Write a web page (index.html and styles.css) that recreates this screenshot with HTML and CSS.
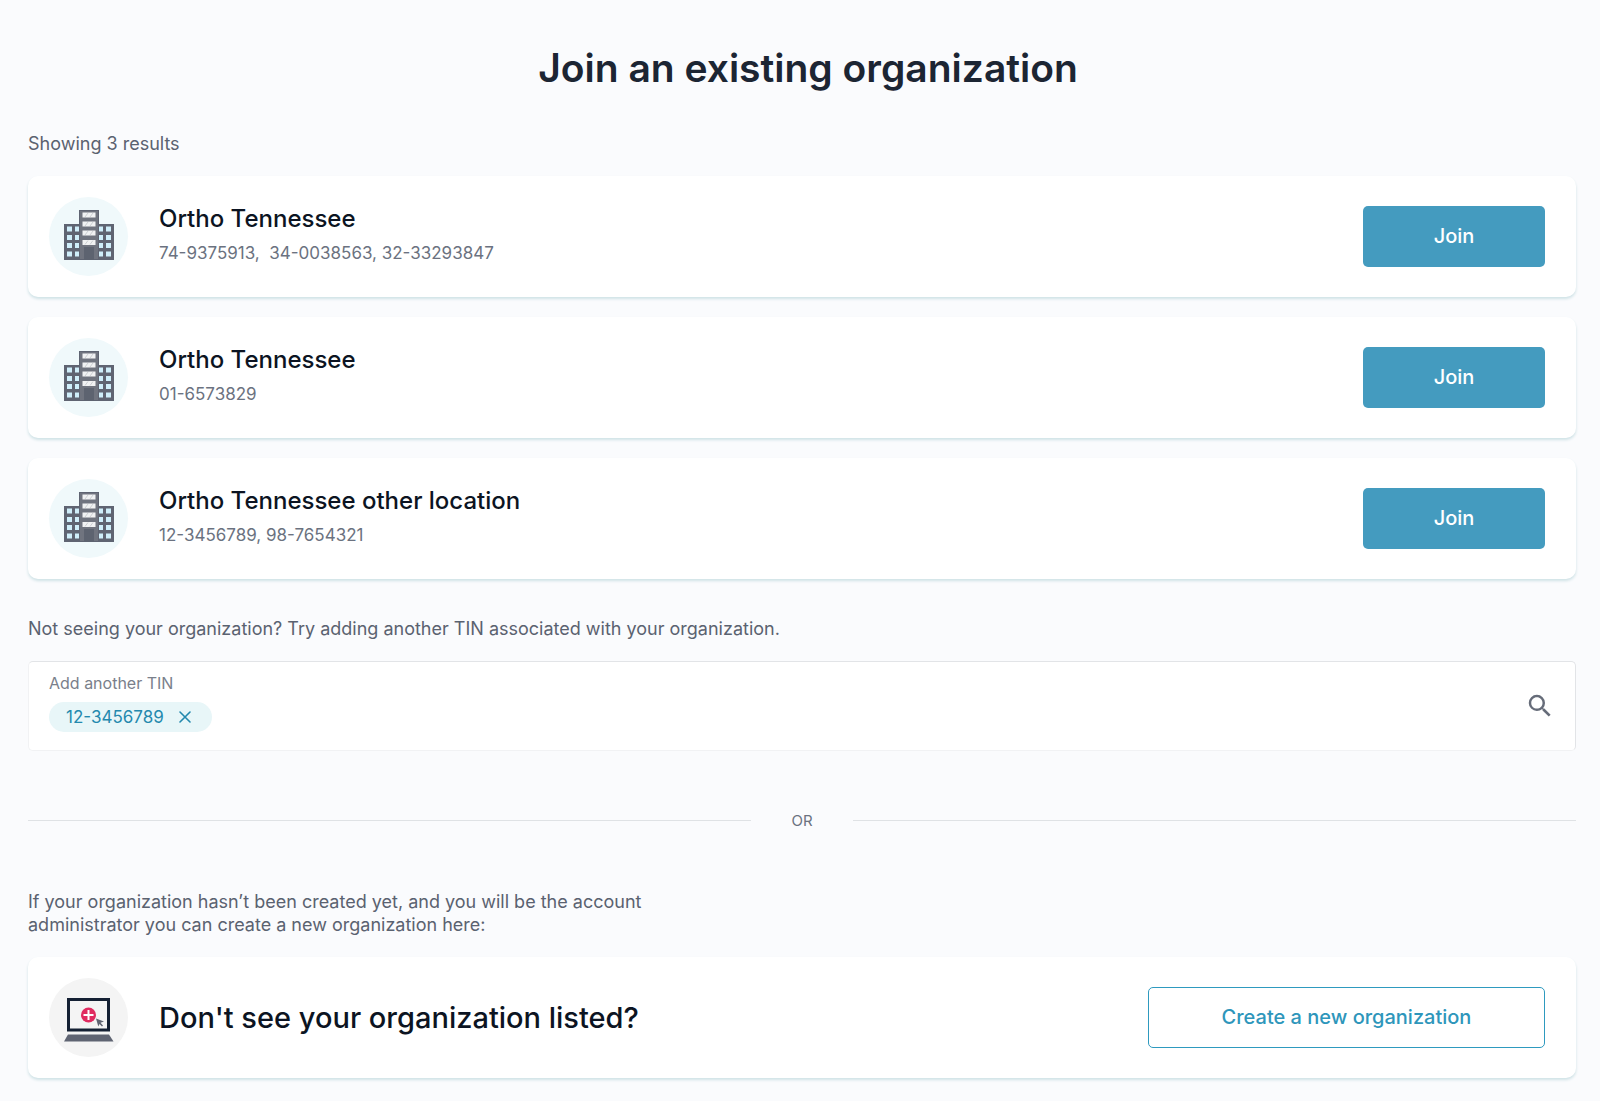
FILE: index.html
```html
<!DOCTYPE html>
<html lang="en">
<head>
<meta charset="utf-8">
<meta name="viewport" content="width=device-width, initial-scale=1">
<title>Join an existing organization</title>
<link rel="stylesheet" href="styles.css">
</head>
<body>
<svg class="sprite" aria-hidden="true">
  <symbol id="building" viewBox="0 0 50 50">
    <path fill="#5f6472" d="M0 14h15V0h20v14h15v36H0z"/>
    <path fill="#70747f" d="M16 1h18v48H16z"/>
    <path fill="#5d6370" d="M20 37h10v13H20z"/>
    <path fill="#f1f2f3" d="M18.500 2.500h13v5h-13zM18.500 11.500h13v5h-13zM18.500 20.500h13v5h-13zM18.500 30h13v5h-13z"/>
    <path stroke="#cdd0d3" d="M21 7l3-4M26 7l3-4M21 16l3-4M26 16l3-4M21 25l3-4M26 25l3-4M21 34.500l3-4M26 34.500l3-4"/>
    <path fill="#cfeefa" d="M3 16.500h5v5H3zM11 16.500h4v5h-4zM35 16.500h4v5h-4zM42 16.500h5v5h-5zM3 25h5v5H3zM11 25h4v5h-4zM35 25h4v5h-4zM42 25h5v5h-5zM3 33h5v5H3zM11 33h4v5h-4zM35 33h4v5h-4zM42 33h5v5h-5zM3 41.500h5v5H3zM11 41.500h4v5h-4zM35 41.500h4v5h-4zM42 41.500h5v5h-5z"/>
  </symbol>
</svg>
<main class="page">
  <h1 class="page-title">Join an existing organization</h1>
  <p class="note">Showing 3 results</p>
  <ul class="results">
    <li class="card">
      <span class="avatar avatar-building"><svg class="avatar-icon" aria-hidden="true"><use href="#building"/></svg></span>
      <div class="card-text">
        <h2 class="card-name">Ortho Tennessee</h2>
        <p class="card-tins">74-9375913,&nbsp; 34-0038563, 32-33293847</p>
      </div>
      <button class="button" type="button">Join</button>
    </li>
    <li class="card">
      <span class="avatar avatar-building"><svg class="avatar-icon" aria-hidden="true"><use href="#building"/></svg></span>
      <div class="card-text">
        <h2 class="card-name">Ortho Tennessee</h2>
        <p class="card-tins">01-6573829</p>
      </div>
      <button class="button" type="button">Join</button>
    </li>
    <li class="card">
      <span class="avatar avatar-building"><svg class="avatar-icon" aria-hidden="true"><use href="#building"/></svg></span>
      <div class="card-text">
        <h2 class="card-name">Ortho Tennessee other location</h2>
        <p class="card-tins">12-3456789, 98-7654321</p>
      </div>
      <button class="button" type="button">Join</button>
    </li>
  </ul>
  <p class="note">Not seeing your organization? Try adding another TIN associated with your organization.</p>
  <form class="tin-field">
    <div class="tin-main">
      <label class="tin-label" for="tin">Add another TIN</label>
      <div class="tin-entry">
        <span class="chip">12-3456789
          <button class="chip-remove" type="button" aria-label="Remove 12-3456789"><svg width="12" height="12" viewBox="0 0 12 12" fill="none" stroke="currentColor" stroke-width="1.600" stroke-linecap="round"><path d="M1 1l10 10M11 1L1 11"/></svg></button>
        </span>
        <input class="tin-input" id="tin" type="text">
      </div>
    </div>
    <button class="search" type="submit" aria-label="Search"><svg width="30" height="30" viewBox="0 0 24 24" fill="currentColor"><path d="M15.500 14h-.79l-.28-.27A6.470 6.470 0 0 0 16 9.500 6.500 6.500 0 1 0 9.500 16c1.610 0 3.090-.59 4.230-1.570l.27.28v.79l5 4.990L20.490 19l-4.990-5zm-6 0C7.010 14 5 11.990 5 9.500S7.010 5 9.500 5 14 7.010 14 9.500 11.990 14 9.500 14z"/></svg></button>
  </form>
  <div class="divider">OR</div>
  <p class="note create-note">If your organization hasn’t been created yet, and you will be the account administrator you can create a new organization here:</p>
  <section class="card">
    <span class="avatar"><svg class="avatar-icon" viewBox="0 0 50 50" aria-hidden="true">
      <path fill="none" stroke="#142033" stroke-width="3" d="M4.500 6.500h40V37h-40z"/>
      <path fill="#5f6472" d="M4 41.500h41l4.500 7H0z"/>
      <circle cx="24.500" cy="22" r="7.500" fill="#e02b60"/>
      <path stroke="#fff" stroke-width="2" d="M24.500 17v10M19.500 22h10"/>
      <path fill="#5f6472" d="M32 25.500l8 3-3.500 1.300 2.500 2.700-1 1-2.500-2.500-1.200 2.500z"/>
    </svg></span>
    <h2 class="card-text create-title">Don't see your organization listed?</h2>
    <button class="button button-outline" type="button">Create a new organization</button>
  </section>
</main>
</body>
</html>
```
FILE: styles.css
```css
* {
  box-sizing: border-box;
}

body {
  margin: 0;
  background: #fafbfd;
  color: #5a6270;
  font: 18px/23px Inter, "Open Sans", sans-serif;
}

h1, h2, p, ul {
  margin: 0;
  padding: 0;
}

button, input {
  padding: 0;
  border: 0;
  background: none;
  color: inherit;
  font: inherit;
}

button {
  cursor: pointer;
}

.sprite {
  display: none;
}

.page {
  padding: 44px 24px 24px 28px;
}

.page-title {
  margin-bottom: 40px;
  padding-left: 12px;
  color: #1c2533;
  font-size: 39px;
  font-weight: 600;
  line-height: 48px;
  text-align: center;
}

.results {
  display: grid;
  gap: 20px;
  margin: 21px 0 38px;
  list-style: none;
}

.card {
  display: flex;
  align-items: center;
  min-height: 121px;
  padding: 20px 31px 20px 21px;
  border-radius: 10px;
  background: #fff;
  box-shadow: 0 2px 3px #cfe2e6;
}

.avatar {
  display: grid;
  place-items: center;
  flex: none;
  width: 79px;
  height: 79px;
  margin-right: 31px;
  border-radius: 50%;
  background: #f4f4f4;
}

.avatar-building {
  padding-bottom: 4px;
  background: #f0f9fb;
}

.avatar-icon {
  width: 50px;
  height: 50px;
}

.card-text {
  flex: 1;
}

.card-name {
  margin-bottom: 8px;
  color: #0c1422;
  font-size: 24px;
  font-weight: 500;
  line-height: 28px;
}

.card-tins {
  padding-bottom: 4px;
  color: #6b7280;
  font-size: 17px;
  line-height: 24px;
}

.button {
  min-width: 182px;
  height: 61px;
  border-radius: 5px;
  background: #449bbf;
  color: #fff;
  font-size: 20px;
  font-weight: 500;
}

.button-outline {
  min-width: 397px;
  border: 1px solid #2e9abf;
  background: #fff;
  color: #2e96bb;
}

.tin-field {
  display: flex;
  align-items: center;
  min-height: 90px;
  margin-top: 21px;
  padding: 10px 20px;
  border: 1px solid #e2e4e7;
  border-bottom-color: #f1f2f4;
  border-left-color: #f1f2f4;
  border-radius: 5px;
  background: #fff;
}

.tin-main {
  flex: 1;
  padding-bottom: 8px;
}

.tin-label {
  display: block;
  margin-bottom: 8px;
  color: #7a808b;
  font-size: 16px;
  line-height: 22px;
}

.tin-entry {
  display: flex;
}

.tin-input {
  flex: 1;
  margin-left: 8px;
  outline: 0;
}

.chip {
  display: flex;
  align-items: center;
  gap: 15px;
  height: 30px;
  padding: 0 21px 0 17px;
  border-radius: 15px;
  background: #e8f6f8;
  color: #2489ae;
  font-size: 17px;
}

.chip-remove {
  display: flex;
}

.search {
  display: flex;
  color: #666c79;
}

.divider {
  display: flex;
  align-items: center;
  gap: 40px;
  margin: 58px 0;
  color: #6b7280;
  font-size: 15px;
}

.divider::before,
.divider::after {
  flex: 1;
  height: 1px;
  background: #dfe2e5;
  content: "";
}

.create-note {
  max-width: 680px;
  margin-bottom: 21px;
}

.create-title {
  color: #0c1422;
  font-size: 29px;
  font-weight: 500;
  line-height: 36px;
}
```
